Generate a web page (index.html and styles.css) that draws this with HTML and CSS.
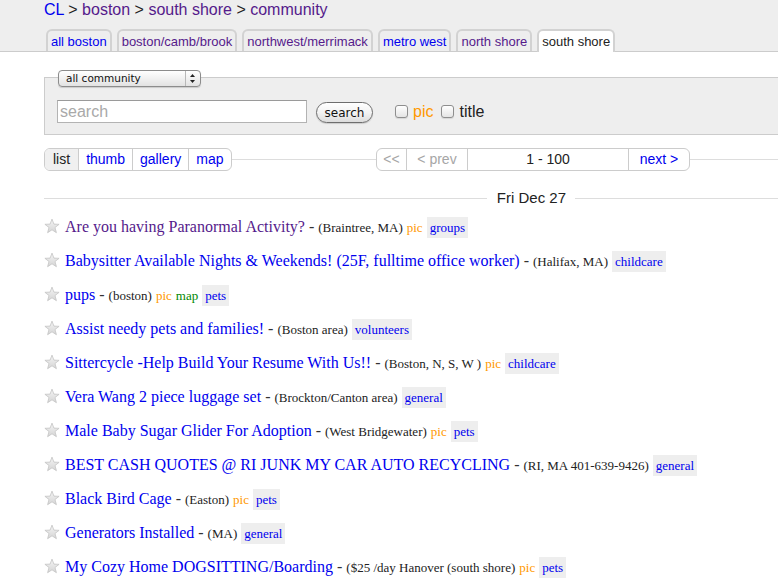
FILE: index.html
```html
<!DOCTYPE html>
<html>
<head>
<meta charset="utf-8">
<title>boston south shore community - craigslist</title>
<link rel="stylesheet" href="styles.css">
</head>
<body>
<div class="page">
  <header class="header">
    <div class="crumbs"><a class="link" href="#">CL</a> &gt; <a class="visited" href="#">boston</a> &gt; <a class="visited" href="#">south shore</a> &gt; <a class="visited" href="#">community</a></div>
    <nav class="tabs">
      <a class="tab link" href="#">all boston</a>
      <a class="tab visited" href="#">boston/camb/brook</a>
      <a class="tab visited" href="#">northwest/merrimack</a>
      <a class="tab link" href="#">metro west</a>
      <a class="tab visited" href="#">north shore</a>
      <span class="tab current">south shore</span>
    </nav>
  </header>

  <form class="searchbox">
    <div class="selectrow">
      <span class="select"><span class="select-text">all community</span><span class="select-arrows"><svg width="13" height="15" viewBox="0 0 13 15"><path d="M4 6 L6.5 3 L9 6 Z" fill="#222"/><path d="M4 9 L6.5 12 L9 9 Z" fill="#222"/></svg></span></span>
    </div>
    <div class="searchrow">
      <input class="q" type="text" placeholder="search">
      <button class="btn" type="button">search</button>
      <input class="cb cb-first" type="checkbox"><span class="lbl pic-lbl">pic</span>
      <input class="cb" type="checkbox"><span class="lbl">title</span>
    </div>
  </form>

  <div class="navrow">
    <div class="views">
      <span class="vbtn sel">list</span><a class="vbtn" href="#">thumb</a><a class="vbtn" href="#">gallery</a><a class="vbtn" href="#">map</a>
    </div>
    <div class="pager">
      <span class="pcell first dim">&lt;&lt;</span><span class="pcell prev dim">&lt; prev</span><span class="pcell range">1 - 100</span><a class="pcell next" href="#">next &gt;</a>
    </div>
  </div>

  <h4 class="date"><span class="date-text">Fri Dec 27</span></h4>

  <ul class="rows">
    <li class="row"><svg class="star" width="16" height="16" viewBox="0 0 16 16"><defs><linearGradient id="sg" x1="0" y1="0" x2="0" y2="1"><stop offset="0" stop-color="#f6f6f6"/><stop offset="1" stop-color="#d4d4d4"/></linearGradient></defs><polygon points="8,1.1 9.9,6.1 15.1,6.3 11,9.5 12.4,14.7 8,11.8 3.6,14.7 5,9.5 0.9,6.3 6.1,6.1" fill="url(#sg)" stroke="#c4c4c4" stroke-width="0.8" stroke-linejoin="round"/></svg><a class="title visited" href="#">Are you having Paranormal Activity?</a> - <small class="meta">(Braintree, MA)</small> <span class="pic">pic</span> <a class="tag" href="#">groups</a></li>
    <li class="row"><svg class="star" width="16" height="16" viewBox="0 0 16 16"><polygon points="8,1.1 9.9,6.1 15.1,6.3 11,9.5 12.4,14.7 8,11.8 3.6,14.7 5,9.5 0.9,6.3 6.1,6.1" fill="url(#sg)" stroke="#c4c4c4" stroke-width="0.8" stroke-linejoin="round"/></svg><a class="title" href="#">Babysitter Available Nights &amp; Weekends! (25F, fulltime office worker)</a> - <small class="meta">(Halifax, MA)</small> <a class="tag" href="#">childcare</a></li>
    <li class="row"><svg class="star" width="16" height="16" viewBox="0 0 16 16"><polygon points="8,1.1 9.9,6.1 15.1,6.3 11,9.5 12.4,14.7 8,11.8 3.6,14.7 5,9.5 0.9,6.3 6.1,6.1" fill="url(#sg)" stroke="#c4c4c4" stroke-width="0.8" stroke-linejoin="round"/></svg><a class="title" href="#">pups</a> - <small class="meta">(boston)</small> <span class="pic">pic</span> <span class="map">map</span> <a class="tag" href="#">pets</a></li>
    <li class="row"><svg class="star" width="16" height="16" viewBox="0 0 16 16"><polygon points="8,1.1 9.9,6.1 15.1,6.3 11,9.5 12.4,14.7 8,11.8 3.6,14.7 5,9.5 0.9,6.3 6.1,6.1" fill="url(#sg)" stroke="#c4c4c4" stroke-width="0.8" stroke-linejoin="round"/></svg><a class="title" href="#">Assist needy pets and families!</a> - <small class="meta">(Boston area)</small> <a class="tag" href="#">volunteers</a></li>
    <li class="row"><svg class="star" width="16" height="16" viewBox="0 0 16 16"><polygon points="8,1.1 9.9,6.1 15.1,6.3 11,9.5 12.4,14.7 8,11.8 3.6,14.7 5,9.5 0.9,6.3 6.1,6.1" fill="url(#sg)" stroke="#c4c4c4" stroke-width="0.8" stroke-linejoin="round"/></svg><a class="title" href="#">Sittercycle -Help Build Your Resume With Us!!</a> - <small class="meta">(Boston, N, S, W )</small> <span class="pic">pic</span> <a class="tag" href="#">childcare</a></li>
    <li class="row"><svg class="star" width="16" height="16" viewBox="0 0 16 16"><polygon points="8,1.1 9.9,6.1 15.1,6.3 11,9.5 12.4,14.7 8,11.8 3.6,14.7 5,9.5 0.9,6.3 6.1,6.1" fill="url(#sg)" stroke="#c4c4c4" stroke-width="0.8" stroke-linejoin="round"/></svg><a class="title" href="#">Vera Wang 2 piece luggage set</a> - <small class="meta">(Brockton/Canton area)</small> <a class="tag" href="#">general</a></li>
    <li class="row"><svg class="star" width="16" height="16" viewBox="0 0 16 16"><polygon points="8,1.1 9.9,6.1 15.1,6.3 11,9.5 12.4,14.7 8,11.8 3.6,14.7 5,9.5 0.9,6.3 6.1,6.1" fill="url(#sg)" stroke="#c4c4c4" stroke-width="0.8" stroke-linejoin="round"/></svg><a class="title" href="#">Male Baby Sugar Glider For Adoption</a> - <small class="meta">(West Bridgewater)</small> <span class="pic">pic</span> <a class="tag" href="#">pets</a></li>
    <li class="row"><svg class="star" width="16" height="16" viewBox="0 0 16 16"><polygon points="8,1.1 9.9,6.1 15.1,6.3 11,9.5 12.4,14.7 8,11.8 3.6,14.7 5,9.5 0.9,6.3 6.1,6.1" fill="url(#sg)" stroke="#c4c4c4" stroke-width="0.8" stroke-linejoin="round"/></svg><a class="title" href="#">BEST CASH QUOTES @ RI JUNK MY CAR AUTO RECYCLING</a> - <small class="meta">(RI, MA 401-639-9426)</small> <a class="tag" href="#">general</a></li>
    <li class="row"><svg class="star" width="16" height="16" viewBox="0 0 16 16"><polygon points="8,1.1 9.9,6.1 15.1,6.3 11,9.5 12.4,14.7 8,11.8 3.6,14.7 5,9.5 0.9,6.3 6.1,6.1" fill="url(#sg)" stroke="#c4c4c4" stroke-width="0.8" stroke-linejoin="round"/></svg><a class="title" href="#">Black Bird Cage</a> - <small class="meta">(Easton)</small> <span class="pic">pic</span> <a class="tag" href="#">pets</a></li>
    <li class="row"><svg class="star" width="16" height="16" viewBox="0 0 16 16"><polygon points="8,1.1 9.9,6.1 15.1,6.3 11,9.5 12.4,14.7 8,11.8 3.6,14.7 5,9.5 0.9,6.3 6.1,6.1" fill="url(#sg)" stroke="#c4c4c4" stroke-width="0.8" stroke-linejoin="round"/></svg><a class="title" href="#">Generators Installed</a> - <small class="meta">(MA)</small> <a class="tag" href="#">general</a></li>
    <li class="row"><svg class="star" width="16" height="16" viewBox="0 0 16 16"><polygon points="8,1.1 9.9,6.1 15.1,6.3 11,9.5 12.4,14.7 8,11.8 3.6,14.7 5,9.5 0.9,6.3 6.1,6.1" fill="url(#sg)" stroke="#c4c4c4" stroke-width="0.8" stroke-linejoin="round"/></svg><a class="title" href="#">My Cozy Home DOGSITTING/Boarding</a> - <small class="meta">($25 /day Hanover (south shore)</small> <span class="pic">pic</span> <a class="tag" href="#">pets</a></li>
  </ul>
</div>
</body>
</html>
```

FILE: styles.css
```css
html, body {
  margin: 0;
  padding: 0;
  overflow: hidden;
  background: #fff;
}
body {
  font-family: "Liberation Serif", "Times New Roman", serif;
  color: #222;
}
a { text-decoration: none; }
.link { color: #0000ee; }
.visited { color: #551a8b; }

.page { width: 100%; }

/* header */
.header {
  background: #eeeeee;
  border-bottom: 1px solid #cccccc;
  padding-left: 44px;
}
.crumbs {
  font: 16px/20px "Liberation Sans", Arial, sans-serif;
  color: #222;
  height: 20px;
}
.tabs {
  display: flex;
  align-items: flex-start;
  gap: 5px;
  margin: 9px 0 -1px 2px;
}
.tab {
  font: 13px/21px "Liberation Sans", Arial, sans-serif;
  height: 20px;
  padding: 0 3px;
  border: 2px solid #d2d2d2;
  border-bottom: 0;
  border-radius: 6px 6px 0 0;
  background: #eeeeee;
}
.tab.current {
  background: #fff;
  color: #222;
  height: 21px;
}

/* search box */
.searchbox {
  margin: 25px 0 0 44px;
  border: 1px solid #cccccc;
  border-right: 0;
  background: #eeeeee;
  padding: 0 12px 11px;
}
.selectrow {
  margin: -10px 0 0 1px;
  height: 17px;
}
.select {
  display: inline-flex;
  align-items: center;
  box-sizing: border-box;
  width: 143px;
  height: 17px;
  border: 1px solid #8c8c8c;
  border-radius: 4px;
  background: linear-gradient(#ffffff, #f1f1f1 50%, #e2e2e2);
  box-shadow: 0 1px 1px rgba(0,0,0,0.15);
  font: 10.5px/15px "DejaVu Sans", sans-serif;
  color: #111;
}
.select-text {
  flex: 1;
  padding-left: 7px;
}
.select-arrows {
  display: flex;
  width: 14px;
  height: 15px;
  border-left: 1px solid #b8b8b8;
}
.searchrow {
  display: flex;
  align-items: center;
  margin-top: 15px;
  height: 23px;
}
.q {
  box-sizing: border-box;
  width: 250px;
  height: 23px;
  margin: 0;
  border: 1px solid #b3b3b3;
  border-top-color: #9a9a9a;
  background: #fff;
  padding: 0 2px;
  font: 16px "Liberation Sans", Arial, sans-serif;
  color: #222;
}
.q::placeholder { color: #a9a9a9; }
.btn {
  box-sizing: border-box;
  width: 57px;
  height: 21px;
  margin: 1px 0 0 9px;
  padding: 2px 0 0;
  border: 1px solid #6e6e6e;
  border-radius: 11px;
  background: linear-gradient(#ffffff, #f3f3f3 50%, #dcdcdc);
  box-shadow: 0 1px 1px rgba(0,0,0,0.15);
  font: 12px/17px "DejaVu Sans", sans-serif;
  color: #111;
}
.cb {
  appearance: none;
  -webkit-appearance: none;
  box-sizing: border-box;
  width: 13px;
  height: 13px;
  margin: 0 0 0 8px;
  border: 1px solid #8e8e8e;
  border-radius: 3px;
  background: linear-gradient(#ffffff, #e4e4e4);
  box-shadow: 0 1px 1px rgba(0,0,0,0.1);
}
.cb-first { margin-left: 22px; }
.lbl {
  margin-left: 5px;
  font: 16px/23px "Liberation Sans", Arial, sans-serif;
  color: #222;
}
.pic-lbl { color: #ff9900; }

/* nav row */
.navrow {
  display: grid;
  grid-template-columns: 1fr auto 88px;
  align-items: center;
  margin: 13px 0 0 44px;
  height: 23px;
  background: linear-gradient(#dddddd, #dddddd) 0 50% / 100% 1px no-repeat;
}
.views {
  justify-self: start;
  display: flex;
  border: 1px solid #cccccc;
  border-radius: 6px;
  overflow: hidden;
  background: #fff;
  font: 14px/21px "Liberation Sans", Arial, sans-serif;
}
.vbtn {
  padding: 0 7px;
  color: #0000ee;
  border-left: 1px solid #cccccc;
}
.vbtn:first-child { border-left: 0; padding: 0 8px; }
.vbtn.sel { background: #f0f0f0; color: #222; }
.pager {
  display: flex;
  border: 1px solid #cccccc;
  border-radius: 6px;
  overflow: hidden;
  background: #fff;
  font: 14px/21px "Liberation Sans", Arial, sans-serif;
}
.pcell {
  box-sizing: border-box;
  text-align: center;
  border-left: 1px solid #cccccc;
  color: #222;
}
.pcell.first { border-left: 0; width: 29px; }
.pcell.prev { width: 61px; }
.pcell.range { width: 161px; }
.pcell.next { width: 61px; color: #0000ee; }
.pcell.dim { color: #a6a6a6; }

/* date */
.date {
  display: flex;
  align-items: center;
  margin: 17px 0 0 44px;
  height: 20px;
  font: normal 15px/20px "Liberation Sans", Arial, sans-serif;
  color: #222;
}
.date::before,
.date::after {
  content: "";
  height: 1px;
  background: #dddddd;
}
.date::before { flex: 1; }
.date::after { width: 203px; }
.date-text { padding: 0 9px 0 10px; }

/* rows */
.rows {
  list-style: none;
  margin: 2px 0 0 44px;
  padding: 0;
}
.row {
  height: 34px;
  line-height: 34px;
  font-size: 16px;
  white-space: nowrap;
  overflow: hidden;
  color: #333;
}
.star {
  vertical-align: -2px;
  margin-right: 5px;
}
.title { color: #0000ee; }
.title.visited { color: #551a8b; }
.meta {
  font-size: 13px;
  color: #222;
}
.pic {
  font-size: 13px;
  color: #ff9900;
}
.map {
  font-size: 13px;
  color: #008800;
}
.tag {
  font-size: 13px;
  color: #0000ee;
  background: #eeeeee;
  padding: 3px 3px;
}
```
